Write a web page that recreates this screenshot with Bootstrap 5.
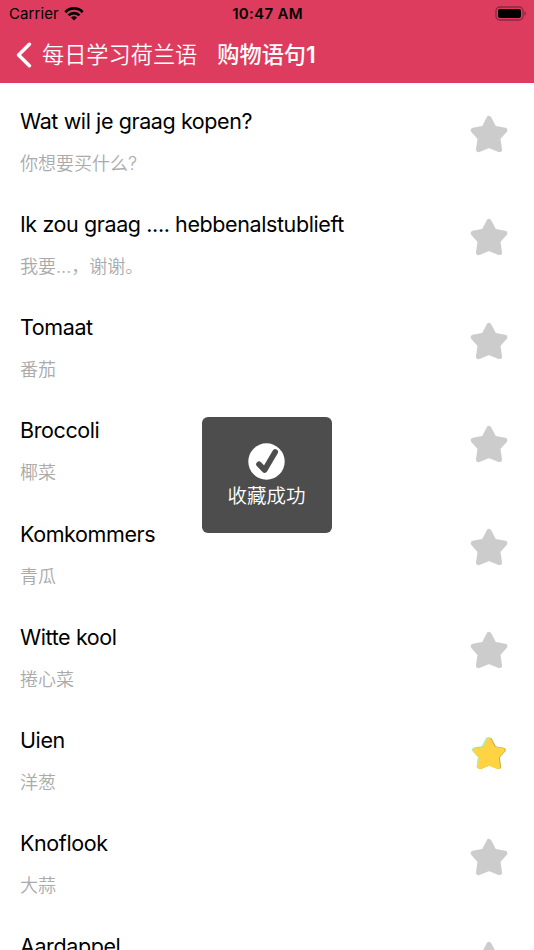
<!DOCTYPE html>
<html lang="zh-CN">
<head>
<meta charset="utf-8">
<meta name="viewport" content="width=device-width, initial-scale=1">
<title>购物语句1</title>
<link href="https://cdn.jsdelivr.net/npm/bootstrap@5.3.0/dist/css/bootstrap.min.css" rel="stylesheet">
<style>
  body { font-family: Inter, "Noto Sans CJK SC", sans-serif; height: 950px; color: #000; }
  svg { display: block; flex: none; }
  .app-head { background: #de3c5e; height: 82.7px; }
  .status-line { height: 27px; font-size: 15px; line-height: 27px; padding: 0 8px 0 9px; }
  .status-line > * { flex: 1 1 0; }
  .carrier { letter-spacing: .1px; }
  .clock { font-weight: 600; letter-spacing: .3px; margin-left: -1px; }
  .battery { margin-right: -1px; }
  .title-line { height: 55.7px; padding-left: 16px; font-size: 22.2px; line-height: 55px; color: #fff; }
  .back-label { margin-left: 9px; font-weight: 350; }
  .page-title { margin-left: 20px; font-weight: 500; }
  .page-title b { font-weight: 600; font-size: 23px; }
  .phrase-list { height: 867.3px; }
  .phrase { height: 103.2px; padding: 0 25px 0 20px; }
  .phrase-nl { font-size: 21.5px; line-height: 30px; margin-top: 13.2px; letter-spacing: -.4px; }
  .phrase-zh { font-size: 18px; line-height: 24px; margin-top: 16px; height: 24px; color: #aaa; font-weight: 350; }
  .notice { width: 130.5px; height: 116px; top: 417px; left: 201.7px; background: #4d4d4d; border-radius: 6px; color: #fff; font-size: 19.5px; font-weight: 350; line-height: 26px; padding-top: 25.5px; }
  .notice span { margin: 3px 1px 0 0; }
</style>
</head>
<body class="bg-white overflow-hidden position-relative">
<svg width="0" height="0" class="position-absolute">
  <symbol id="star" viewBox="0 0 38 38"><path d="M19 4.2 23.9 13.6 34 15.4 27.4 22.9 29 33.8 19 29.8 9 33.8 10.6 22.9 4 15.4 14.1 13.6Z" stroke-width="4.8" stroke-linejoin="round"/></symbol>
</svg>
<header class="app-head">
  <div class="status-line d-flex align-items-center">
    <div class="carrier d-flex align-items-center">Carrier
      <svg class="ms-1" width="22" height="16" viewBox="0 0 22 16" fill="none" stroke="#000" stroke-width="2.7"><path d="M2.3 6.2a12 12 0 0 1 17.4 0M5.5 9.4a7.6 7.6 0 0 1 11 0"/><path d="M11 14.6 8 11.6a4.2 4.2 0 0 1 6 0Z" fill="#000" stroke="none"/></svg>
    </div>
    <div class="clock text-center">10:47 AM</div>
    <div class="battery d-flex justify-content-end">
      <svg width="32" height="15" viewBox="0 0 32 15"><rect x="1" y="1" width="27" height="13" rx="3.8" fill="none" stroke="#8b2940" stroke-width="1.3"/><rect x="3" y="3" width="23" height="9" rx="2" fill="#000"/><path d="M29.4 5.2c2.1.8 2.1 3.8 0 4.6Z" fill="#8b2940"/></svg>
    </div>
  </div>
  <nav class="title-line d-flex align-items-center">
    <svg width="17" height="26" viewBox="0 0 17 26" fill="none" stroke="#fff" stroke-width="3.5" stroke-linecap="round" stroke-linejoin="round"><path d="M13.4 2.3 2.6 13 13.4 23.7"/></svg>
    <span class="back-label">每日学习荷兰语</span>
    <span class="page-title">购物语句<b>1</b></span>
  </nav>
</header>
<main id="phrases" class="phrase-list overflow-hidden"></main>
<div class="notice position-absolute d-flex flex-column align-items-center" role="status">
  <svg width="37" height="37" viewBox="0 0 37 37"><circle cx="18.5" cy="18.5" r="18.2" fill="#fff"/><path d="M11 21.3 16.6 27 27.2 9" fill="none" stroke="#4d4d4d" stroke-width="5.6" stroke-linecap="round" stroke-linejoin="round"/></svg>
  <span>收藏成功</span>
</div>
<script src="https://cdn.jsdelivr.net/npm/bootstrap@5.3.0/dist/js/bootstrap.bundle.min.js"></script>
<script>
  const phrases = [
    ["Wat wil je graag kopen?", "你想要买什么?"],
    ["Ik zou graag .... hebbenalstublieft", "我要...，谢谢。"],
    ["Tomaat", "番茄"],
    ["Broccoli", "椰菜"],
    ["Komkommers", "青瓜"],
    ["Witte kool", "捲心菜"],
    ["Uien", "洋葱", true],
    ["Knoflook", "大蒜"],
    ["Aardappel", ""]
  ];
  const grey = '<svg width="40" height="40" viewBox="0 0 38 38"><use href="#star" fill="#ccc" stroke="#ccc"/></svg>';
  const gold = '<svg width="40" height="40" viewBox="-2 -3 44 44"><use href="#star" x="-.4" width="38" height="38" fill="#a9edc2" stroke="#a9edc2"/><use href="#star" x="2" y=".3" width="38" height="38" fill="#b9b04a" stroke="#b9b04a"/><use href="#star" x=".9" y=".6" width="38" height="38" fill="#ffd341" stroke="#ffd341"/></svg>';
  document.getElementById("phrases").innerHTML = phrases.map(([nl, zh, saved]) =>
    `<section class="phrase d-flex align-items-center justify-content-between"><div><div class="phrase-nl">${nl}</div><div class="phrase-zh">${zh}</div></div>${saved ? gold : grey}</section>`).join("");
</script>
</body>
</html>
